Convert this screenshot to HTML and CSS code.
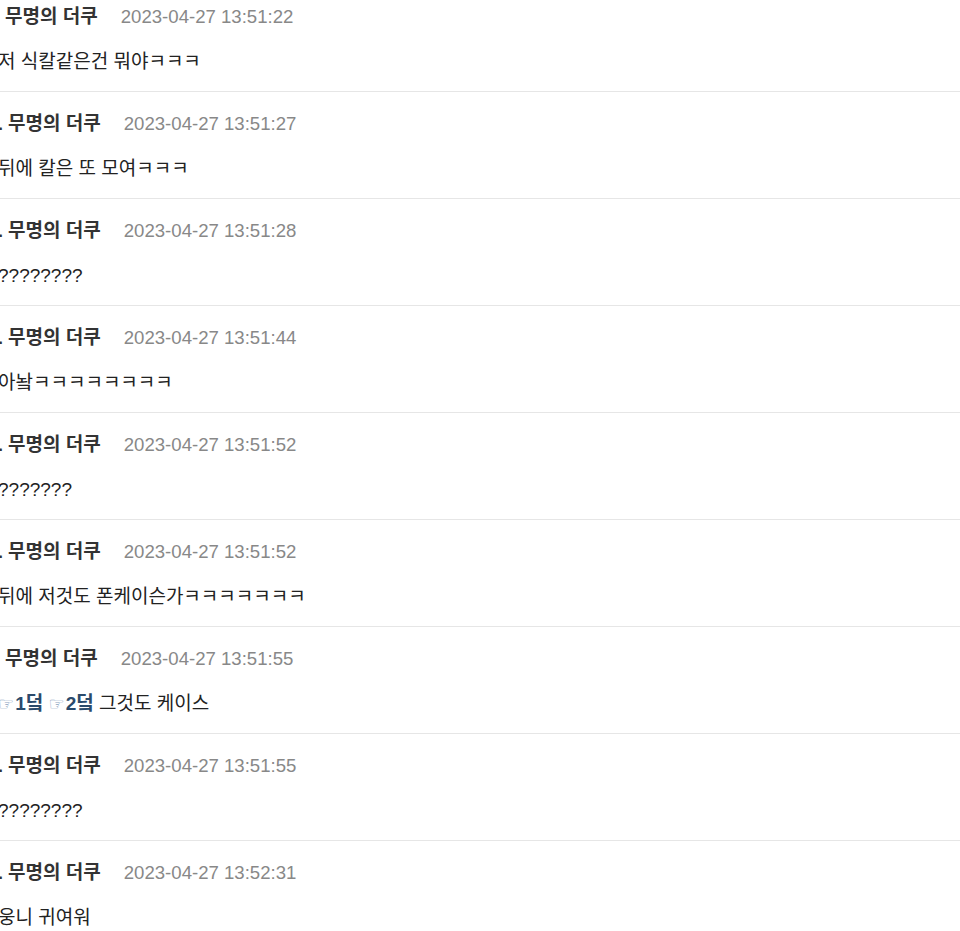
FILE: index.html
```html
<!DOCTYPE html>
<html lang="ko">
<head>
  <meta charset="UTF-8" />
  <meta name="viewport" content="width=device-width, initial-scale=1.0"/>
  <title>댓글</title>
  <link rel="stylesheet" href="styles.css">
</head>
<body>
  <ul class="comments">
    <li class="comment">
      <div class="head"><span class="num short">11.</span><span class="name">무명의 더쿠</span><span class="date">2023-04-27 13:51:22</span></div>
      <p class="text">저 식칼같은건 뭐야ㅋㅋㅋ</p>
    </li>
    <li class="comment">
      <div class="head"><span class="num">12.</span><span class="name">무명의 더쿠</span><span class="date">2023-04-27 13:51:27</span></div>
      <p class="text">뒤에 칼은 또 모여ㅋㅋㅋ</p>
    </li>
    <li class="comment">
      <div class="head"><span class="num">13.</span><span class="name">무명의 더쿠</span><span class="date">2023-04-27 13:51:28</span></div>
      <p class="text">????????</p>
    </li>
    <li class="comment">
      <div class="head"><span class="num">14.</span><span class="name">무명의 더쿠</span><span class="date">2023-04-27 13:51:44</span></div>
      <p class="text">아놬ㅋㅋㅋㅋㅋㅋㅋㅋ</p>
    </li>
    <li class="comment">
      <div class="head"><span class="num">15.</span><span class="name">무명의 더쿠</span><span class="date">2023-04-27 13:51:52</span></div>
      <p class="text">???????</p>
    </li>
    <li class="comment">
      <div class="head"><span class="num">16.</span><span class="name">무명의 더쿠</span><span class="date">2023-04-27 13:51:52</span></div>
      <p class="text">뒤에 저것도 폰케이슨가ㅋㅋㅋㅋㅋㅋㅋ</p>
    </li>
    <li class="comment">
      <div class="head"><span class="num short">17.</span><span class="name">무명의 더쿠</span><span class="date">2023-04-27 13:51:55</span></div>
      <p class="text"><a class="reply" href="#"><span class="hand">☞</span>1덬</a> <a class="reply" href="#"><span class="hand">☞</span>2덬</a> 그것도 케이스</p>
    </li>
    <li class="comment">
      <div class="head"><span class="num">18.</span><span class="name">무명의 더쿠</span><span class="date">2023-04-27 13:51:55</span></div>
      <p class="text">????????</p>
    </li>
    <li class="comment">
      <div class="head"><span class="num">19.</span><span class="name">무명의 더쿠</span><span class="date">2023-04-27 13:52:31</span></div>
      <p class="text">웅니 귀여워</p>
    </li>
  </ul>
</body>
</html>
```

FILE: styles.css
```css
* {
  box-sizing: border-box;
  margin: 0;
  padding: 0;
}
body {
  font-family: "Noto Sans CJK KR", "Noto Sans", sans-serif;
  background: #fff;
  color: #222;
  overflow: hidden;
}

/* list is cropped a little at the top and left, as in the capture */
.comments {
  list-style: none;
  margin: -15px 0 0 -2px;
}
.comment {
  padding: 16px 0 15px;
  border-bottom: 1px solid #e6e6e6;
}

.head {
  display: flex;
  align-items: baseline;
  height: 28px;
  line-height: 28px;
}
.num {
  width: 24px;
  margin-left: -19px;
  margin-right: 5px;
  text-align: right;
  font-family: "Liberation Sans", sans-serif;
  font-weight: bold;
  font-size: 17px;
  color: #333;
}
.num.short {
  margin-left: -22px;
  visibility: hidden;
}
.name {
  font-size: 19px;
  font-weight: bold;
  color: #333;
}
.date {
  margin-left: 23px;
  font-family: "Liberation Sans", sans-serif;
  font-size: 18.6px;
  color: #888;
}

.text {
  margin-top: 19px;
  height: 28px;
  line-height: 28px;
  font-family: "Liberation Sans", "Noto Sans CJK KR", sans-serif;
  font-size: 19px;
  color: #222;
}
.reply {
  text-decoration: none;
  font-weight: bold;
  color: #2b4a6b;
}
.hand {
  font-family: "DejaVu Sans", sans-serif;
  font-weight: normal;
  font-size: 18px;
  margin-right: 1px;
  color: #8aa4bf;
}
```
